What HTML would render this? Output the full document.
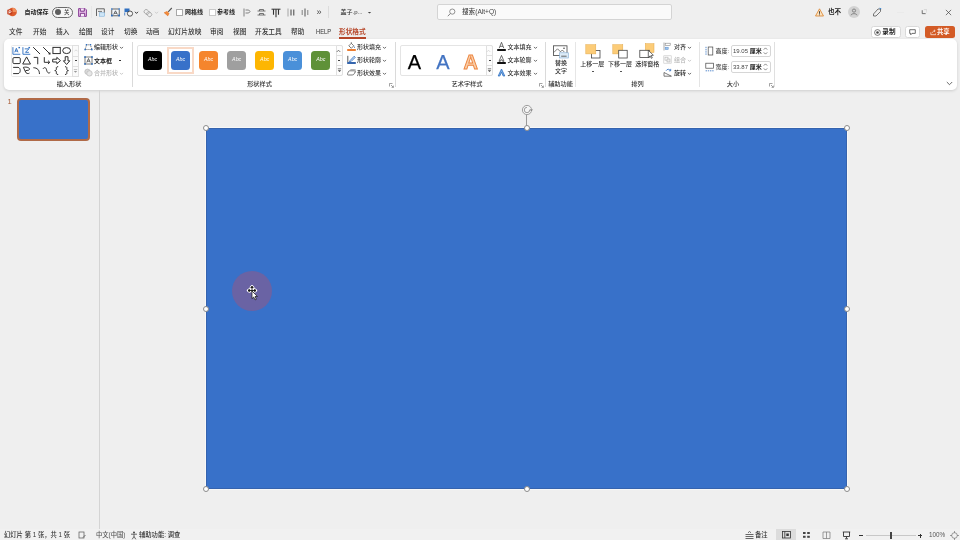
<!DOCTYPE html>
<html lang="zh-CN">
<head>
<meta charset="utf-8">
<title>PowerPoint</title>
<style>
*{box-sizing:border-box;margin:0;padding:0}
html,body{width:960px;height:540px;overflow:hidden}
body{background:#efefef;font-family:"Liberation Sans","Noto Sans CJK SC",sans-serif;font-size:6px;color:#2a2a2a;position:relative;line-height:1}
.a{position:absolute;white-space:nowrap}
.t{position:absolute;white-space:nowrap;line-height:8px;height:8px;font-weight:500;color:#333}
.g{color:#b5b5b5}
.tb{top:28px;font-size:6.7px;color:#333}
#ribbon{left:4px;top:38.800px;width:952.600px;height:51.200px;background:#fff;border-radius:5px;box-shadow:0 1px 3px rgba(0,0,0,.14)}
.sep{position:absolute;top:42px;height:45px;width:1px;background:#dadada}
.gl{position:absolute;top:80px;line-height:8px;font-size:6.2px;font-weight:500;color:#333;white-space:nowrap;transform:translateX(-50%)}
.sw{position:absolute;top:51px;width:19px;height:19px;border-radius:3.500px;color:#fff;font-size:5.300px;line-height:17px;text-align:center;font-style:italic}
.wa{top:51px;-webkit-text-stroke:.25px currentColor;font-size:20px;line-height:22px;font-family:"Liberation Sans",sans-serif}
.h{position:absolute;width:6px;height:6px;border-radius:50%;background:#fff;border:1px solid #8a8a8a;margin:-3px 0 0 -3px}
</style>
</head>
<body>
<div id="app" style="position:absolute;left:0;top:0;width:960px;height:540px;will-change:transform">
<!-- TITLE BAR -->
<div id="titlebar">
<svg class="a" style="left:7px;top:7px" width="10" height="10" viewBox="0 0 10 10"><circle cx="5.500" cy="5" r="4.300" fill="#dc5b2c"/><path d="M5.500 .7A4.300 4.300 0 0 1 9.800 5H5.500z" fill="#f08f5c"/><rect x=".3" y="2.600" width="5" height="5" rx=".8" fill="#c43e1c"/><path d="M2 6.600V3.700h1.200a.9.900 0 0 1 0 1.800H2" fill="none" stroke="#fff" stroke-width=".7"/></svg>
<div class="t" style="left:24.500px;top:8px;font-weight:700;color:#222">自动保存</div>
<div class="a" style="left:52px;top:6.500px;width:21px;height:11px;border-radius:6px;border:1px solid #6a6a6a;background:#f6f6f6"></div>
<div class="a" style="left:54.500px;top:9px;width:6px;height:6px;border-radius:50%;background:#5e5e5e"></div>
<div class="t" style="left:64px;top:8px;font-size:5.400px;color:#444">关</div>
<svg class="a" style="left:78px;top:8px" width="9" height="9" viewBox="0 0 9 9"><path d="M.6.600h6.500l1.300 1.300v6.500H.6z" fill="#ecc3ee" stroke="#8a3f98" stroke-width="1"/><path d="M2.300.6v2.600h4V.6M2.300 8.400V5.300h4.400v3.100" fill="#f8e9f9" stroke="#7b3488" stroke-width="1"/></svg>
<div class="a" style="left:91px;top:6px;width:1px;height:12px;background:#e6e6e6"></div>
<svg class="a" style="left:96px;top:8px" width="9" height="9" viewBox="0 0 9 9"><path d="M.5 8V.8h7.800v4" fill="none" stroke="#444" stroke-width=".8"/><path d="M2 3.400h4" stroke="#444" stroke-width=".7"/><rect x="3.600" y="4.800" width="5" height="3.400" fill="#cfe6f7" stroke="#6aa6d8" stroke-width=".5"/></svg>
<svg class="a" style="left:110.500px;top:8px" width="9" height="9" viewBox="0 0 9 9"><rect x=".8" y="1" width="7.400" height="6.800" fill="#f3f7fc" stroke="#444" stroke-width=".8"/><path d="M2.600 6.500L4.500 2.800l1.900 3.700M3.200 5.300h2.600" fill="none" stroke="#333" stroke-width=".7"/><rect x="0" y="6.600" width="1.800" height="1.800" fill="#2f6fc0"/><rect x="7.200" y="6.600" width="1.800" height="1.800" fill="#2f6fc0"/><rect x="0" y=".2" width="1.600" height="1.600" fill="#5c93d6"/><rect x="7.400" y=".2" width="1.600" height="1.600" fill="#5c93d6"/></svg>
<svg class="a" style="left:123.500px;top:8px" width="10" height="9" viewBox="0 0 10 9"><rect x=".5" y=".5" width="5" height="3.600" fill="#2f6fc0"/><path d="M.7 4.500v3" stroke="#2f6fc0" stroke-width=".8"/><circle cx="6" cy="5.600" r="2.600" fill="#f4f4f4" stroke="#333" stroke-width=".8"/></svg>
<svg class="a" style="left:134px;top:11px" width="5" height="4" viewBox="0 0 5 4"><path d="M1 .8L2.500 2.400 4 .8" fill="none" stroke="#222" stroke-width=".9"/></svg>
<svg class="a" style="left:142.500px;top:7.500px" width="10" height="10" viewBox="0 0 10 10"><rect x="1" y="2" width="5.200" height="4" rx="1.800" transform="rotate(40 3.600 4)" fill="none" stroke="#a6a6a6" stroke-width=".9"/><rect x="3.600" y="4.200" width="5.200" height="4" rx="1.800" transform="rotate(40 6.200 6.200)" fill="none" stroke="#a6a6a6" stroke-width=".9"/></svg>
<svg class="a" style="left:153.500px;top:11px" width="5" height="4" viewBox="0 0 5 4"><path d="M1 .8L2.500 2.400 4 .8" fill="none" stroke="#c4c4c4" stroke-width=".8"/></svg>
<svg class="a" style="left:162.500px;top:7px" width="10" height="10" viewBox="0 0 10 10"><path d="M1 5.500l3-1.500 2.500 2.500L5 9z" fill="#f08a3c"/><path d="M5.200 4.800L8.800 1" stroke="#555" stroke-width="1.100"/><path d="M1 5.500l4 3.500" stroke="#d96a20" stroke-width=".6"/></svg>
<div class="a" style="left:176px;top:8.500px;width:7px;height:7px;border:1px solid #a8a8a8;background:#fff"></div>
<div class="t" style="left:185px;top:8px;font-weight:700;color:#222">网格线</div>
<div class="a" style="left:208.500px;top:8.500px;width:7px;height:7px;border:1px solid #c9c9c9;background:#fff"></div>
<div class="t" style="left:217px;top:8px;font-weight:700;color:#222">参考线</div>
<svg class="a" style="left:242px;top:8px" width="9" height="9" viewBox="0 0 9 9"><path d="M2 .5v8M3.500 2h3.200l1.300 1.500L6.700 5H3.500" fill="none" stroke="#666" stroke-width=".8"/></svg>
<svg class="a" style="left:257px;top:8px" width="9" height="9" viewBox="0 0 9 9"><path d="M.5 3h8M.5 7h8M2.500 3V1.500h4V3M2.500 7V5.500h4V7" fill="none" stroke="#555" stroke-width=".8"/></svg>
<svg class="a" style="left:271px;top:7.500px" width="10" height="10" viewBox="0 0 10 10"><path d="M.5 1.200h9" stroke="#333" stroke-width="1"/><path d="M2.500 1.200v5.500M5 1.200v8M7.500 1.200v5.500" stroke="#333" stroke-width="1.100"/></svg>
<svg class="a" style="left:286.500px;top:8px" width="9" height="9" viewBox="0 0 9 9"><path d="M1 .5v8" stroke="#888" stroke-width=".7"/><path d="M4 1.500v6M6.800 1.500v6" stroke="#444" stroke-width="1"/></svg>
<svg class="a" style="left:299.500px;top:8px" width="10" height="9" viewBox="0 0 10 9"><path d="M5 .5v8" stroke="#444" stroke-width=".9"/><path d="M2.200 2v5M7.800 2v5" stroke="#777" stroke-width=".9"/></svg>
<div class="t" style="left:316.500px;top:7.800px;font-size:9px;color:#444">»</div>
<div class="a" style="left:328px;top:6px;width:1px;height:12px;background:#dcdcdc"></div>
<div class="t" style="left:340.500px;top:8px;color:#333">盖子.p...</div>
<svg class="a" style="left:367px;top:11px" width="5" height="4" viewBox="0 0 5 4"><path d="M.8.900L2.500 2.600 4.200.9z" fill="#444"/></svg>
<div class="a" style="left:437px;top:3.700px;width:234.500px;height:16.800px;border:1px solid #d4d4d4;border-radius:2px;background:#fafafa"></div>
<svg class="a" style="left:447px;top:7.500px" width="9" height="9" viewBox="0 0 9 9"><circle cx="5.300" cy="3.600" r="2.600" fill="none" stroke="#666" stroke-width=".7"/><path d="M3.400 5.500L.8 8.200" stroke="#666" stroke-width=".8"/></svg>
<div class="t" style="left:462px;top:8px;color:#444;font-size:6.600px">搜索(Alt+Q)</div>
<svg class="a" style="left:815px;top:7.500px" width="9" height="9" viewBox="0 0 9 9"><path d="M4.500.8L8.500 8H.5z" fill="#fbe3c0" stroke="#d9822b" stroke-width=".8"/><path d="M4.500 3.200v2.600M4.500 6.500v.8" stroke="#333" stroke-width=".9"/></svg>
<div class="t" style="left:828px;top:8px;font-weight:700;color:#222;font-size:6.600px">也不</div>
<div class="a" style="left:848px;top:6px;width:12px;height:12px;border-radius:50%;background:#d2d2d2"></div>
<svg class="a" style="left:849px;top:7px" width="10" height="10" viewBox="0 0 10 10"><circle cx="5" cy="3.600" r="1.600" fill="none" stroke="#666" stroke-width=".7"/><path d="M2 8.300c.3-2.200 5.700-2.200 6 0" fill="none" stroke="#666" stroke-width=".7"/></svg>
<svg class="a" style="left:872px;top:7px" width="11" height="10" viewBox="0 0 11 10"><path d="M1.500 7l4.500-5h2.500v2.500l-4.500 4.500H1.500z" fill="none" stroke="#555" stroke-width=".8"/><path d="M7.500 1.200l1.800.6" stroke="#3b8ad8" stroke-width="1"/></svg>
<div class="a" style="left:897px;top:11.500px;width:7px;height:1px;background:#eaeaea"></div>
<svg class="a" style="left:920.800px;top:9px" width="6.500" height="6.500" viewBox="0 0 8 8"><path d="M1.500 1.500v4.200h4.200" fill="none" stroke="#444" stroke-width=".9"/><path d="M3.500 .8h3.700v3.700" fill="none" stroke="#bbb" stroke-width=".6"/></svg>
<svg class="a" style="left:945px;top:9px" width="7" height="7" viewBox="0 0 8 8"><path d="M1 1l6 6M7 1L1 7" stroke="#444" stroke-width=".8"/></svg>
</div>
<!-- TABS -->
<div id="tabs">
<div class="t tb" style="left:9px">文件</div>
<div class="t tb" style="left:33px">开始</div>
<div class="t tb" style="left:56px">插入</div>
<div class="t tb" style="left:79px">绘图</div>
<div class="t tb" style="left:101px">设计</div>
<div class="t tb" style="left:124px">切换</div>
<div class="t tb" style="left:146px">动画</div>
<div class="t tb" style="left:168px">幻灯片放映</div>
<div class="t tb" style="left:210px">审阅</div>
<div class="t tb" style="left:233px">视图</div>
<div class="t tb" style="left:255px">开发工具</div>
<div class="t tb" style="left:291px">帮助</div>
<div class="t tb" style="left:315.500px;font-size:7.200px;transform:scaleX(.8);transform-origin:0 50%">HELP</div>
<div class="t tb" style="left:339px;color:#b7472a;font-weight:700">形状格式</div>
<div class="a" style="left:339px;top:37px;width:27px;height:1.500px;background:#b7472a"></div>
<div class="a" style="left:871px;top:26px;width:29.500px;height:12px;border:1px solid #d9d9d9;border-radius:2.500px;background:#fff"></div>
<svg class="a" style="left:874px;top:28.500px" width="7" height="7" viewBox="0 0 7 7"><circle cx="3.500" cy="3.500" r="2.900" fill="none" stroke="#444" stroke-width=".7"/><circle cx="3.500" cy="3.500" r="1.300" fill="#444"/></svg>
<div class="t" style="left:882.300px;top:28px;font-weight:700;color:#222;font-size:6.600px">录制</div>
<div class="a" style="left:905px;top:26px;width:15px;height:12px;border:1px solid #d9d9d9;border-radius:2.500px;background:#fff"></div>
<svg class="a" style="left:908.500px;top:28.500px" width="7" height="7" viewBox="0 0 8 8"><path d="M.8.800h6.400v4.200H3.400L2 6.600V5H.8z" fill="none" stroke="#333" stroke-width=".8"/></svg>
<div class="a" style="left:925px;top:26px;width:30px;height:12px;border-radius:2.500px;background:#d35b26"></div>
<svg class="a" style="left:929.500px;top:29px" width="6.500" height="6.500" viewBox="0 0 8 8"><path d="M1 4v3h6V5.500" fill="none" stroke="#fff" stroke-width=".8"/><path d="M3 4.500c.5-1.800 1.800-2.300 3.200-2.300M5 1l1.400 1.200L5 3.500" fill="none" stroke="#fff" stroke-width=".8"/></svg>
<div class="t" style="left:937px;top:28px;font-weight:700;color:#fff;font-size:6.300px">共享</div>
</div>
<!-- RIBBON -->
<div id="ribbon" class="a"></div>
<div id="ribboncontent">
<div class="a" style="left:11px;top:45px;width:68px;height:31.500px;border:1px solid #eaeaea;border-radius:1.500px;background:#fff"></div>
<div class="a" style="left:72px;top:45px;width:7px;height:31.500px;border:1px solid #e0e0e0;background:#fafafa"></div>
<div class="a" style="left:72px;top:55.500px;width:7px;height:1px;background:#e0e0e0"></div><div class="a" style="left:72px;top:65.500px;width:7px;height:1px;background:#e0e0e0"></div>
<svg class="a" style="left:73.500px;top:49px" width="4" height="3" viewBox="0 0 4 3"><path d="M.5 2.300L2 .8l1.500 1.500" fill="none" stroke="#c8c8c8" stroke-width=".6"/></svg>
<div class="a" style="left:74.500px;top:60px;width:2px;height:1px;background:#444"></div>
<svg class="a" style="left:73px;top:68.500px" width="5" height="5" viewBox="0 0 5 5"><path d="M.8.600h3.400" stroke="#999" stroke-width=".6"/><path d="M.8 2l1.700 1.800L4.200 2z" fill="#999"/></svg>
<svg class="a" style="left:12.4px;top:45.7px" width="9.200" height="9.200" viewBox="0 0 8 8"><path d="M.8 1v6.200h6.400" fill="none" stroke="#2f6fc0" stroke-width=".8"/><path d="M2.400 5.500L3.800 2l1.400 3.500M2.900 4.400h1.800" fill="none" stroke="#2f6fc0" stroke-width=".8" stroke-width=".6"/><rect x="5.600" y=".8" width="1.400" height="1.200" fill="#2f6fc0"/></svg>
<svg class="a" style="left:22.4px;top:45.7px" width="9.200" height="9.200" viewBox="0 0 8 8"><path d="M.8 1v6.200h6.400" fill="none" stroke="#2f6fc0" stroke-width=".8"/><path d="M2.400 2.500h3.600L3 5.500h3" fill="none" stroke="#2f6fc0" stroke-width=".8" stroke-width=".6"/><rect x="5.600" y=".8" width="1.400" height="1.200" fill="#2f6fc0"/></svg>
<svg class="a" style="left:32.4px;top:45.7px" width="9.200" height="9.200" viewBox="0 0 8 8"><path d="M1 1l6 6" fill="none" stroke="#2a2a2a" stroke-width=".85"/></svg>
<svg class="a" style="left:42.4px;top:45.7px" width="9.200" height="9.200" viewBox="0 0 8 8"><path d="M1 1l5.500 5.500" fill="none" stroke="#2a2a2a" stroke-width=".85"/><rect x="5.800" y="5.800" width="1.600" height="1.600" fill="#222"/></svg>
<svg class="a" style="left:52.4px;top:45.7px" width="9.200" height="9.200" viewBox="0 0 8 8"><rect x=".8" y="1.200" width="6.400" height="5.400" fill="none" stroke="#2a2a2a" stroke-width=".85"/></svg>
<svg class="a" style="left:62.4px;top:45.7px" width="9.200" height="9.200" viewBox="0 0 8 8"><ellipse cx="4" cy="4" rx="3.400" ry="2.600" fill="none" stroke="#2a2a2a" stroke-width=".85"/></svg>
<svg class="a" style="left:12.4px;top:56.2px" width="9.200" height="9.200" viewBox="0 0 8 8"><rect x=".8" y="1.400" width="6.400" height="5.200" rx="1" fill="none" stroke="#2a2a2a" stroke-width=".85"/></svg>
<svg class="a" style="left:22.4px;top:56.2px" width="9.200" height="9.200" viewBox="0 0 8 8"><path d="M4 .8L7.400 7H.6z" fill="none" stroke="#2a2a2a" stroke-width=".85"/></svg>
<svg class="a" style="left:32.4px;top:56.2px" width="9.200" height="9.200" viewBox="0 0 8 8"><path d="M1.500 1.200h3.500v6" fill="none" stroke="#2a2a2a" stroke-width=".85"/></svg>
<svg class="a" style="left:42.4px;top:56.2px" width="9.200" height="9.200" viewBox="0 0 8 8"><path d="M2 1v4.500h4.500M5.200 4l1.600 1.500-1.600 1.500" fill="none" stroke="#2a2a2a" stroke-width=".85"/></svg>
<svg class="a" style="left:52.4px;top:56.2px" width="9.200" height="9.200" viewBox="0 0 8 8"><path d="M.6 2.800h3.600V1.200L7.400 4 4.200 6.800V5.200H.6z" fill="none" stroke="#2a2a2a" stroke-width=".85" stroke-width=".7"/></svg>
<svg class="a" style="left:62.4px;top:56.2px" width="9.200" height="9.200" viewBox="0 0 8 8"><path d="M2.800.6h2.400v3.600h1.600L4 7.400 1.200 4.200h1.600z" fill="none" stroke="#2a2a2a" stroke-width=".85" stroke-width=".7"/></svg>
<svg class="a" style="left:12.4px;top:66.2px" width="9.200" height="9.200" viewBox="0 0 8 8"><path d="M1 1.200h4.200c2.600 0 2.600 5.400 0 5.400H1" fill="none" stroke="#2a2a2a" stroke-width=".85"/></svg>
<svg class="a" style="left:22.4px;top:66.2px" width="9.200" height="9.200" viewBox="0 0 8 8"><path d="M1.200 1.200C4 .5 7 1.500 6.500 3 6 4.500 2.500 3 3 5c.4 1.600 2.500 2 3.500 1.200M1.200 1.200L3 5" fill="none" stroke="#2a2a2a" stroke-width=".85" stroke-width=".7"/></svg>
<svg class="a" style="left:32.4px;top:66.2px" width="9.200" height="9.200" viewBox="0 0 8 8"><path d="M1.200 1.500C4.500 1.500 6.500 3.500 6.500 7" fill="none" stroke="#2a2a2a" stroke-width=".85"/></svg>
<svg class="a" style="left:42.4px;top:66.2px" width="9.200" height="9.200" viewBox="0 0 8 8"><path d="M.8 2.500C2.500.5 3.500 1.500 4 3.500s1.500 3.500 3.200 2" fill="none" stroke="#2a2a2a" stroke-width=".85"/></svg>
<svg class="a" style="left:52.4px;top:66.2px" width="9.200" height="9.200" viewBox="0 0 8 8"><path d="M5.400.6C3.400.6 3.800 1.600 3.800 2.600 3.800 3.600 3.400 3.900 2.400 4 3.400 4.100 3.800 4.400 3.800 5.400 3.800 6.400 3.400 7.400 5.400 7.400" fill="none" stroke="#2a2a2a" stroke-width=".85" stroke-width=".7"/></svg>
<svg class="a" style="left:62.4px;top:66.2px" width="9.200" height="9.200" viewBox="0 0 8 8"><path d="M2.600.6C4.600.6 4.200 1.600 4.200 2.600 4.200 3.600 4.600 3.900 5.600 4 4.600 4.100 4.200 4.400 4.200 5.400 4.200 6.400 4.600 7.400 2.600 7.400" fill="none" stroke="#2a2a2a" stroke-width=".85" stroke-width=".7"/></svg>
<svg class="a" style="left:84px;top:43px" width="9" height="8" viewBox="0 0 9 8"><path d="M1.200 6.500L2.500 1.800h4l1.300 4.700z" fill="none" stroke="#444" stroke-width=".7" stroke-dasharray="1.200 .8"/><rect x=".4" y="5.700" width="1.600" height="1.600" fill="#2f6fc0"/><rect x="7" y="5.700" width="1.600" height="1.600" fill="#2f6fc0"/><rect x="1.800" y="1" width="1.400" height="1.400" fill="#2f6fc0"/><rect x="5.800" y="1" width="1.400" height="1.400" fill="#2f6fc0"/></svg>
<div class="t" style="left:94px;top:43px">编辑形状</div>
<svg class="a" style="left:118.6px;top:45.500px" width="5" height="4" viewBox="0 0 5 4"><path d="M1 .9L2.500 2.400 4 .9" fill="none" stroke="#444" stroke-width=".8"/></svg>
<svg class="a" style="left:84px;top:56px" width="9" height="9" viewBox="0 0 9 9"><rect x="1" y="1" width="7" height="7" fill="none" stroke="#444" stroke-width=".7"/><path d="M2.800 6.500L4.500 2.500l1.700 4M3.400 5.200h2.200" fill="none" stroke="#333" stroke-width=".7"/><rect x=".2" y=".2" width="1.600" height="1.600" fill="#2f6fc0"/><rect x="7.200" y=".2" width="1.600" height="1.600" fill="#2f6fc0"/><rect x=".2" y="7.200" width="1.600" height="1.600" fill="#2f6fc0"/><rect x="7.200" y="7.200" width="1.600" height="1.600" fill="#2f6fc0"/></svg>
<div class="t" style="left:94px;top:56.500px;color:#222;font-weight:700">文本框</div>
<div class="a" style="left:119px;top:60px;width:2px;height:1px;background:#333"></div>
<svg class="a" style="left:84px;top:68px" width="9" height="9" viewBox="0 0 9 9"><circle cx="3.500" cy="3.800" r="2.700" fill="#d9d9d9" stroke="#b9b9b9" stroke-width=".7"/><circle cx="5.500" cy="5.400" r="2.700" fill="#e6e6e6" stroke="#b9b9b9" stroke-width=".7"/></svg>
<div class="t g" style="left:94px;top:69px">合并形状</div>
<svg class="a" style="left:118.6px;top:71.500px" width="5" height="4" viewBox="0 0 5 4"><path d="M1 .9L2.500 2.400 4 .9" fill="none" stroke="#bdbdbd" stroke-width=".8"/></svg>
<div class="gl" style="left:69px">插入形状</div>
<div class="sep" style="left:132px"></div>
<div class="a" style="left:137px;top:45px;width:205.500px;height:30.500px;border:1px solid #e4e4e4;border-radius:2px;background:#fff"></div>
<div class="a" style="left:335.500px;top:45px;width:7px;height:30.500px;border:1px solid #e0e0e0;background:#fdfdfd;border-radius:0 2px 2px 0"></div>
<div class="a" style="left:335.500px;top:55px;width:7px;height:1px;background:#e0e0e0"></div><div class="a" style="left:335.500px;top:65px;width:7px;height:1px;background:#e0e0e0"></div>
<svg class="a" style="left:335.6px;top:48.500px" width="5" height="4" viewBox="0 0 5 4"><path d="M.7 3L2.500 1.200 4.300 3" fill="none" stroke="#444" stroke-width=".7"/></svg>
<div class="a" style="left:338px;top:60px;width:2px;height:1px;background:#444"></div>
<svg class="a" style="left:336.500px;top:67.500px" width="5" height="5" viewBox="0 0 5 5"><path d="M.8.800h3.400" stroke="#444" stroke-width=".7"/><path d="M.8 2.200l1.700 1.800L4.200 2.200z" fill="#444"/></svg>
<div class="a" style="left:166.500px;top:46.500px;width:27.500px;height:27px;border:2px solid #f9d9c6;background:#fff"></div>
<div class="sw" style="left:143.0px;background:#000">Abc</div>
<div class="sw" style="left:171.1px;background:#3871c9">Abc</div>
<div class="sw" style="left:199.1px;background:#f5852d">Abc</div>
<div class="sw" style="left:227.2px;background:#9f9f9f">Abc</div>
<div class="sw" style="left:255.2px;background:#fdb602">Abc</div>
<div class="sw" style="left:283.2px;background:#4a90d9">Abc</div>
<div class="sw" style="left:311.3px;background:#5f9138">Abc</div>
<svg class="a" style="left:347px;top:42px" width="9" height="9" viewBox="0 0 9 9"><path d="M1.800 3.800L4.300 1.300l2.500 2.500L4.300 6.300z" fill="none" stroke="#444" stroke-width=".7"/><path d="M4.300 1.300V.2" stroke="#444" stroke-width=".7"/><path d="M7.400 4.200c.6.900.6 1.600 0 1.800-.6-.2-.6-.9 0-1.800z" fill="#2f6fc0"/><rect x=".2" y="7" width="8.600" height="2" fill="#ed7d31"/></svg>
<div class="t" style="left:357px;top:43px">形状填充</div>
<svg class="a" style="left:381.6px;top:45.5px" width="5" height="4" viewBox="0 0 5 4"><path d="M1 .9L2.500 2.400 4 .9" fill="none" stroke="#444" stroke-width=".8"/></svg>
<svg class="a" style="left:347px;top:55px" width="9" height="9" viewBox="0 0 9 9"><path d="M3 5.600L7.200 1.200l1.100 1.100L4 6.600l-1.600.5z" fill="#cfe0f5" stroke="#2f6fc0" stroke-width=".8"/><path d="M.8 .8v6.500" stroke="#333" stroke-width=".8"/><rect x=".2" y="7" width="8.600" height="2" fill="#3565ad"/></svg>
<div class="t" style="left:357px;top:56px">形状轮廓</div>
<svg class="a" style="left:381.6px;top:58.5px" width="5" height="4" viewBox="0 0 5 4"><path d="M1 .9L2.500 2.400 4 .9" fill="none" stroke="#444" stroke-width=".8"/></svg>
<svg class="a" style="left:347px;top:68px" width="9" height="9" viewBox="0 0 9 9"><path d="M2.600 2.800h4.600c1 0 1.200.6.800 1.400l-.8 1.600c-.4.800-1 1.200-2 1.200H1.400c-1 0-1.200-.6-.8-1.400l.6-1.400c.4-.9.800-1.400 1.400-1.400z" fill="#fff" stroke="#444" stroke-width=".7"/><path d="M3.400 1.600h4.400c1 0 1.300.7 1 1.500l-.8 1.800" fill="none" stroke="#888" stroke-width=".7"/></svg>
<div class="t" style="left:357px;top:69px">形状效果</div>
<svg class="a" style="left:381.6px;top:71.5px" width="5" height="4" viewBox="0 0 5 4"><path d="M1 .9L2.500 2.400 4 .9" fill="none" stroke="#444" stroke-width=".8"/></svg>
<div class="gl" style="left:259.500px">形状样式</div>
<svg class="a" style="left:389px;top:83px" width="5" height="5" viewBox="0 0 5 5"><path d="M.5 3.500V.5h3" fill="none" stroke="#666" stroke-width=".6"/><path d="M2 2l2.300 2.300M4.400 2.600v1.800H2.600" fill="none" stroke="#666" stroke-width=".6"/></svg>
<div class="sep" style="left:395px"></div>
<div class="a" style="left:400px;top:45px;width:93px;height:30.500px;border:1px solid #e4e4e4;border-radius:2px;background:#fff"></div>
<div class="a" style="left:486px;top:45px;width:7px;height:30.500px;border:1px solid #e0e0e0;background:#fdfdfd;border-radius:0 2px 2px 0"></div>
<div class="a" style="left:486px;top:55px;width:7px;height:1px;background:#e0e0e0"></div><div class="a" style="left:486px;top:65px;width:7px;height:1px;background:#e0e0e0"></div>
<svg class="a" style="left:486.1px;top:48.500px" width="5" height="4" viewBox="0 0 5 4"><path d="M.7 3L2.500 1.200 4.300 3" fill="none" stroke="#c8c8c8" stroke-width=".6"/></svg>
<div class="a" style="left:488.500px;top:60px;width:2px;height:1px;background:#444"></div>
<svg class="a" style="left:487px;top:67.500px" width="5" height="5" viewBox="0 0 5 5"><path d="M.8.800h3.400" stroke="#444" stroke-width=".7"/><path d="M.8 2.200l1.700 1.800L4.200 2.200z" fill="#444"/></svg>
<div class="a wa" style="left:407.700px;color:#000">A</div>
<div class="a wa" style="left:436.200px;color:#4273c2">A</div>
<svg class="a" style="left:460px;top:50px" width="22" height="22" viewBox="0 0 22 22"><text x="10.800" y="19" text-anchor="middle" font-family="Liberation Sans, sans-serif" font-weight="700" font-size="20" fill="#facfa9" stroke="#ec8540" stroke-width=".9">A</text></svg>
<svg class="a" style="left:497px;top:42px" width="9" height="9" viewBox="0 0 9 9"><path d="M2.200 6.200L4.500.3l2.300 5.900M3 4.300h3" fill="none" stroke="#333" stroke-width=".7"/><rect x=".2" y="7" width="8.600" height="2" fill="#111"/></svg>
<div class="t" style="left:507.5px;top:43px">文本填充</div>
<svg class="a" style="left:532.900px;top:45.5px" width="5" height="4" viewBox="0 0 5 4"><path d="M1 .9L2.500 2.400 4 .9" fill="none" stroke="#444" stroke-width=".8"/></svg>
<svg class="a" style="left:497px;top:55px" width="9" height="9" viewBox="0 0 9 9"><path d="M2 6.300L4.500.4 7 6.300H5.600L5.100 4.800H3.900L3.400 6.300z" fill="#fff" stroke="#333" stroke-width=".7"/><rect x=".2" y="7" width="8.600" height="2" fill="#111"/></svg>
<div class="t" style="left:507.5px;top:56px">文本轮廓</div>
<svg class="a" style="left:532.900px;top:58.5px" width="5" height="4" viewBox="0 0 5 4"><path d="M1 .9L2.500 2.400 4 .9" fill="none" stroke="#444" stroke-width=".8"/></svg>
<svg class="a" style="left:497px;top:68px" width="9" height="9" viewBox="0 0 9 9"><path d="M1.200 8L4.500 1l3.300 7H6.200L4.500 4.200 2.800 8z" fill="#7fb2e8" stroke="#2f6fc0" stroke-width=".8"/></svg>
<div class="t" style="left:507.5px;top:69px">文本效果</div>
<svg class="a" style="left:532.900px;top:71.5px" width="5" height="4" viewBox="0 0 5 4"><path d="M1 .9L2.500 2.400 4 .9" fill="none" stroke="#444" stroke-width=".8"/></svg>
<div class="gl" style="left:467px">艺术字样式</div>
<svg class="a" style="left:539px;top:83px" width="5" height="5" viewBox="0 0 5 5"><path d="M.5 3.500V.5h3" fill="none" stroke="#666" stroke-width=".6"/><path d="M2 2l2.300 2.300M4.400 2.600v1.800H2.600" fill="none" stroke="#666" stroke-width=".6"/></svg>
<div class="sep" style="left:545px"></div>
<svg class="a" style="left:552.500px;top:44.500px" width="16" height="14" viewBox="0 0 16 14"><rect x=".5" y=".8" width="13.500" height="9.700" fill="#fff" stroke="#444" stroke-width=".8"/><path d="M.8 7.500L4.500 3.800l3 3 1.800-1.800 2 2" fill="none" stroke="#444" stroke-width=".7"/><circle cx="11" cy="3.200" r=".8" fill="#444"/><rect x="6.500" y="7.800" width="8.800" height="5.200" fill="#ddebf7" stroke="#7fa8d0" stroke-width=".6"/><path d="M8.200 11.200h5.400" stroke="#444" stroke-width=".8"/></svg>
<div class="t" style="left:555px;top:59px">替换</div>
<div class="t" style="left:555px;top:67px">文字</div>
<div class="gl" style="left:560.500px">辅助功能</div>
<div class="sep" style="left:575px;background:#e6e6e6"></div>
<svg class="a" style="left:584.500px;top:43.500px" width="16" height="15" viewBox="0 0 16 15"><rect x="6.500" y="6.500" width="8.500" height="7.500" fill="#fff" stroke="#444" stroke-width=".8"/><rect x=".8" y=".7" width="10" height="9.200" fill="#fccc78" stroke="#e3a94a" stroke-width=".5"/></svg>
<div class="t" style="left:580.200px;top:60.200px">上移一层</div>
<div class="a" style="left:591.500px;top:71px;width:2px;height:1px;background:#555"></div>
<svg class="a" style="left:611.500px;top:43.500px" width="16" height="15" viewBox="0 0 16 15"><rect x=".8" y=".7" width="10" height="9.200" fill="#fccc78" stroke="#e3a94a" stroke-width=".5"/><rect x="6.700" y="6.300" width="8.500" height="7.700" fill="#fff" stroke="#444" stroke-width=".8"/></svg>
<div class="t" style="left:608px;top:60.200px">下移一层</div>
<div class="a" style="left:619.500px;top:71px;width:2px;height:1px;background:#555"></div>
<svg class="a" style="left:639px;top:43px" width="17" height="16" viewBox="0 0 17 16"><rect x="6.300" y=".7" width="8.700" height="8.800" fill="#fccc78" stroke="#e3a94a" stroke-width=".5"/><rect x=".8" y="7.300" width="9.500" height="7.200" fill="#fff" stroke="#444" stroke-width=".8"/><path d="M9.300 7.200v7.300l1.800-1.600 1.200 2.400 1-.5-1.200-2.300 2.300-.2z" fill="#fff" stroke="#333" stroke-width=".7"/></svg>
<div class="t" style="left:635.200px;top:60.200px">选择窗格</div>
<svg class="a" style="left:662.5px;top:42px" width="9" height="9" viewBox="0 0 9 9"><path d="M1 .5v8" stroke="#777" stroke-width=".6"/><rect x="2.200" y="1.200" width="5" height="2.400" fill="none" stroke="#888" stroke-width=".6"/><rect x="2.200" y="5.200" width="3" height="2.400" fill="#9cc3ea" stroke="#5a8fcf" stroke-width=".5"/></svg>
<div class="t" style="left:674.0px;top:43px">对齐</div>
<svg class="a" style="left:686.6px;top:45.5px" width="5" height="4" viewBox="0 0 5 4"><path d="M1 .9L2.500 2.400 4 .9" fill="none" stroke="#444" stroke-width=".8"/></svg>
<svg class="a" style="left:662.5px;top:55px" width="9" height="9" viewBox="0 0 9 9"><rect x=".8" y=".8" width="7.400" height="7.400" fill="none" stroke="#c4c4c4" stroke-width=".6"/><rect x="2" y="2.200" width="3" height="3" fill="none" stroke="#b8b8b8" stroke-width=".7"/><rect x="4" y="4" width="3" height="3" fill="#eee" stroke="#b8b8b8" stroke-width=".7"/></svg>
<div class="t g" style="left:674.0px;top:56px">组合</div>
<svg class="a" style="left:686.6px;top:58.5px" width="5" height="4" viewBox="0 0 5 4"><path d="M1 .9L2.500 2.400 4 .9" fill="none" stroke="#bdbdbd" stroke-width=".8"/></svg>
<svg class="a" style="left:662.5px;top:68px" width="9" height="9" viewBox="0 0 9 9"><path d="M1 8.200h7.400L1 4.500z" fill="none" stroke="#444" stroke-width=".7"/><path d="M3 2.800C4 .8 6.500.8 7.500 2.600M7.700.9v1.900H5.900" fill="none" stroke="#2f6fc0" stroke-width=".8"/></svg>
<div class="t" style="left:674.0px;top:69px;font-weight:500;color:#222">旋转</div>
<svg class="a" style="left:686.6px;top:71.5px" width="5" height="4" viewBox="0 0 5 4"><path d="M1 .9L2.500 2.400 4 .9" fill="none" stroke="#444" stroke-width=".8"/></svg>
<div class="gl" style="left:637.500px">排列</div>
<div class="sep" style="left:699px;background:#e4e4e4"></div>
<svg class="a" style="left:705px;top:46px" width="9" height="10" viewBox="0 0 9 10"><path d="M1 .8v8.400" stroke="#2f6fc0" stroke-width=".8" stroke-dasharray="1.400 .8"/><rect x="3.200" y="1" width="4.600" height="8" fill="none" stroke="#444" stroke-width=".7"/></svg>
<div class="t" style="left:715.500px;top:47px;color:#444">高度:</div>
<div class="a" style="left:731px;top:45.2px;width:39.500px;height:11.500px;border:1px solid #d6d6d6;border-radius:2px;background:#fff"></div>
<div class="t" style="left:733px;top:47px;color:#444">19.05 <span style="font-weight:700;color:#222">厘米</span></div>
<svg class="a" style="left:763px;top:47px" width="5" height="8" viewBox="0 0 5 8"><path d="M.8 2.600L2.500.9 4.200 2.600M.8 5.400L2.500 7.100 4.200 5.400" fill="none" stroke="#555" stroke-width=".7"/></svg>
<svg class="a" style="left:705px;top:62.2px" width="9" height="10" viewBox="0 0 9 10"><path d="M.6 8.800h8" stroke="#2f6fc0" stroke-width=".8" stroke-dasharray="1.400 .8"/><rect x=".8" y="1.200" width="7.600" height="5" fill="none" stroke="#444" stroke-width=".7"/></svg>
<div class="t" style="left:715.500px;top:63.2px;color:#444">宽度:</div>
<div class="a" style="left:731px;top:61.400px;width:39.500px;height:11.500px;border:1px solid #d6d6d6;border-radius:2px;background:#fff"></div>
<div class="t" style="left:733px;top:63.2px;color:#444">33.87 <span style="font-weight:700;color:#222">厘米</span></div>
<svg class="a" style="left:763px;top:63.200px" width="5" height="8" viewBox="0 0 5 8"><path d="M.8 2.600L2.500.9 4.200 2.600M.8 5.400L2.500 7.100 4.200 5.400" fill="none" stroke="#555" stroke-width=".7"/></svg>
<div class="gl" style="left:733px">大小</div>
<svg class="a" style="left:768.5px;top:83px" width="5" height="5" viewBox="0 0 5 5"><path d="M.5 3.500V.5h3" fill="none" stroke="#666" stroke-width=".6"/><path d="M2 2l2.300 2.300M4.400 2.600v1.800H2.600" fill="none" stroke="#666" stroke-width=".6"/></svg>
<div class="sep" style="left:774px;background:#e0e0e0"></div>
<svg class="a" style="left:945.500px;top:81px" width="7" height="5" viewBox="0 0 7 5"><path d="M.8 1l2.700 2.700L6.200 1" fill="none" stroke="#444" stroke-width=".8"/></svg>
</div>
<!-- LEFT PANEL -->
<div id="left">
<div class="a" style="left:99px;top:90px;width:1px;height:439px;background:#d4d4d4"></div>
<div class="t" style="left:7.500px;top:98px;color:#a85c36;font-size:7.500px;font-weight:500">1</div>
<div class="a" style="left:17px;top:97.800px;width:73.300px;height:43.400px;border-radius:4px;border:2px solid #b06a48;background:#3871c9"></div>
</div>
<!-- CANVAS -->
<div id="canvas">
<div class="a" style="left:205px;top:127px;width:643px;height:363px;background:#f7f7f7"></div>
<div class="a" style="left:206px;top:128px;width:641px;height:361px;background:#3871c9;border:1px solid #3563ae"></div>
<div class="a" style="left:526.300px;top:115px;width:1px;height:11px;background:#9a9a9a"></div>
<svg class="a" style="left:521px;top:104px" width="13" height="12" viewBox="0 0 13 12"><circle cx="6" cy="6" r="4.600" fill="#f4f4f4" stroke="#8a8a8a" stroke-width=".8"/><path d="M8.700 6A2.700 2.700 0 1 1 6 3.300" fill="none" stroke="#8a8a8a" stroke-width=".8"/><path d="M8.300 5.200L10.300 7.600 12.200 5.200Z" fill="#7d7d7d" stroke="#f0f0f0" stroke-width=".3"/></svg>
<div class="h" style="left:206px;top:128px"></div><div class="h" style="left:527px;top:128px"></div><div class="h" style="left:847px;top:128px"></div>
<div class="h" style="left:206px;top:308.5px"></div><div class="h" style="left:847px;top:308.5px"></div>
<div class="h" style="left:206px;top:489px"></div><div class="h" style="left:527px;top:489px"></div><div class="h" style="left:847px;top:489px"></div>
<div class="a" style="left:232.200px;top:270.500px;width:40px;height:40px;border-radius:50%;background:#6a63a4"></div>
<svg class="a" style="left:246px;top:285px" width="13" height="16" viewBox="0 0 13 16"><g fill="none" stroke="#fff" stroke-width="2.400" stroke-linejoin="round"><path d="M6 1.500v6M2.500 5.500h7"/><path d="M4.800 2.600L6 1.200l1.200 1.400zM3.400 4.300L2 5.500l1.400 1.200zM8.600 4.300L10 5.500 8.600 6.700z"/></g><g fill="#111" stroke="#111" stroke-width=".9" stroke-linejoin="round"><path d="M6 1.500v6M2.500 5.500h7" fill="none"/><path d="M4.800 2.600L6 1.200l1.200 1.400zM3.400 4.300L2 5.500l1.400 1.200zM8.600 4.300L10 5.500 8.600 6.700z"/></g><path d="M6 6v7.600l1.700-1.600 1.300 2.900 1.300-.6-1.300-2.800h2.400z" fill="#fff" stroke="#111" stroke-width=".7" stroke-linejoin="round"/></svg>
</div>
<!-- STATUS -->
<div id="status">
<div class="a" style="left:0;top:529px;width:960px;height:11px;background:#f1f1f1"></div>
<div class="t" style="left:4px;top:531.1px;font-size:6.3px">幻灯片 第 1 张，共 1 张</div>
<svg class="a" style="left:78px;top:531.1px" width="9" height="8" viewBox="0 0 9 8"><rect x="1" y="1" width="5" height="6" fill="none" stroke="#555" stroke-width=".7"/><path d="M5 6.500l2.500-2.500" stroke="#555" stroke-width=".8"/></svg>
<div class="t" style="left:96px;top:531.1px;font-size:6.3px;color:#555">中文(中国)</div>
<svg class="a" style="left:130px;top:530.6px" width="8" height="9" viewBox="0 0 8 9"><circle cx="4" cy="1.600" r="1" fill="#444"/><path d="M1 3.200h6M4 3.200v2.500M4 5.500l-1.800 2.800M4 5.500l1.800 2.800" stroke="#444" stroke-width=".8" fill="none"/></svg>
<div class="t" style="left:139px;top:531.1px;font-size:6.3px">辅助功能: 调查</div>
<svg class="a" style="left:745px;top:531.1px" width="9" height="8" viewBox="0 0 9 8"><path d="M.5 3.500h8M.5 5.500h8M.5 7.500h8M3 1.800L4.500.5 6 1.800" stroke="#444" stroke-width=".8" fill="none"/></svg>
<div class="t" style="left:755px;top:531.1px;font-size:6.3px">备注</div>
<div class="a" style="left:776px;top:529px;width:20px;height:11px;background:#dcdcdc"></div>
<svg class="a" style="left:782px;top:531.1px" width="9" height="8" viewBox="0 0 9 8"><rect x=".5" y=".5" width="8" height="6.500" fill="none" stroke="#333" stroke-width=".8"/><path d="M2.800.5v6.500" stroke="#333" stroke-width=".8"/><rect x="4.300" y="2.500" width="2.500" height="2.500" fill="#333"/></svg>
<svg class="a" style="left:802px;top:531.1px" width="9" height="8" viewBox="0 0 9 8"><rect x="1" y="1" width="2.600" height="2" fill="#444"/><rect x="5.200" y="1" width="2.600" height="2" fill="#444"/><rect x="1" y="4.800" width="2.600" height="2" fill="#444"/><rect x="5.200" y="4.800" width="2.600" height="2" fill="#444"/></svg>
<svg class="a" style="left:822px;top:531.1px" width="9" height="8" viewBox="0 0 9 8"><path d="M1 1h7v6.500h-7zM4.500 1v6.500" fill="none" stroke="#777" stroke-width=".7"/></svg>
<svg class="a" style="left:842px;top:530.6px" width="9" height="9" viewBox="0 0 9 9"><path d="M.8 1h7.400M1.500 1v4.500h6V1M4.500 5.500v2M3 7.800h3" fill="none" stroke="#333" stroke-width=".9"/></svg>
<div class="a" style="left:859px;top:535.1px;width:4px;height:1px;background:#333"></div>
<div class="a" style="left:866px;top:535.1px;width:50px;height:1px;background:#c8c8c8"></div>
<div class="a" style="left:890px;top:532.1px;width:2px;height:7px;background:#444"></div>
<div class="a" style="left:918px;top:535.1px;width:4px;height:1px;background:#333"></div>
<div class="a" style="left:919.500px;top:533.6px;width:1px;height:4px;background:#333"></div>
<div class="t" style="left:929px;top:531.1px;font-size:6.3px;color:#555">100%</div>
<svg class="a" style="left:950px;top:530.6px" width="9" height="9" viewBox="0 0 9 9"><circle cx="4.500" cy="4.500" r="2.800" fill="none" stroke="#777" stroke-width=".7"/><path d="M4.500 0v2M4.500 7v2M0 4.500h2M7 4.500h2" stroke="#777" stroke-width=".7"/></svg>
</div>
</div>
</body>
</html>
